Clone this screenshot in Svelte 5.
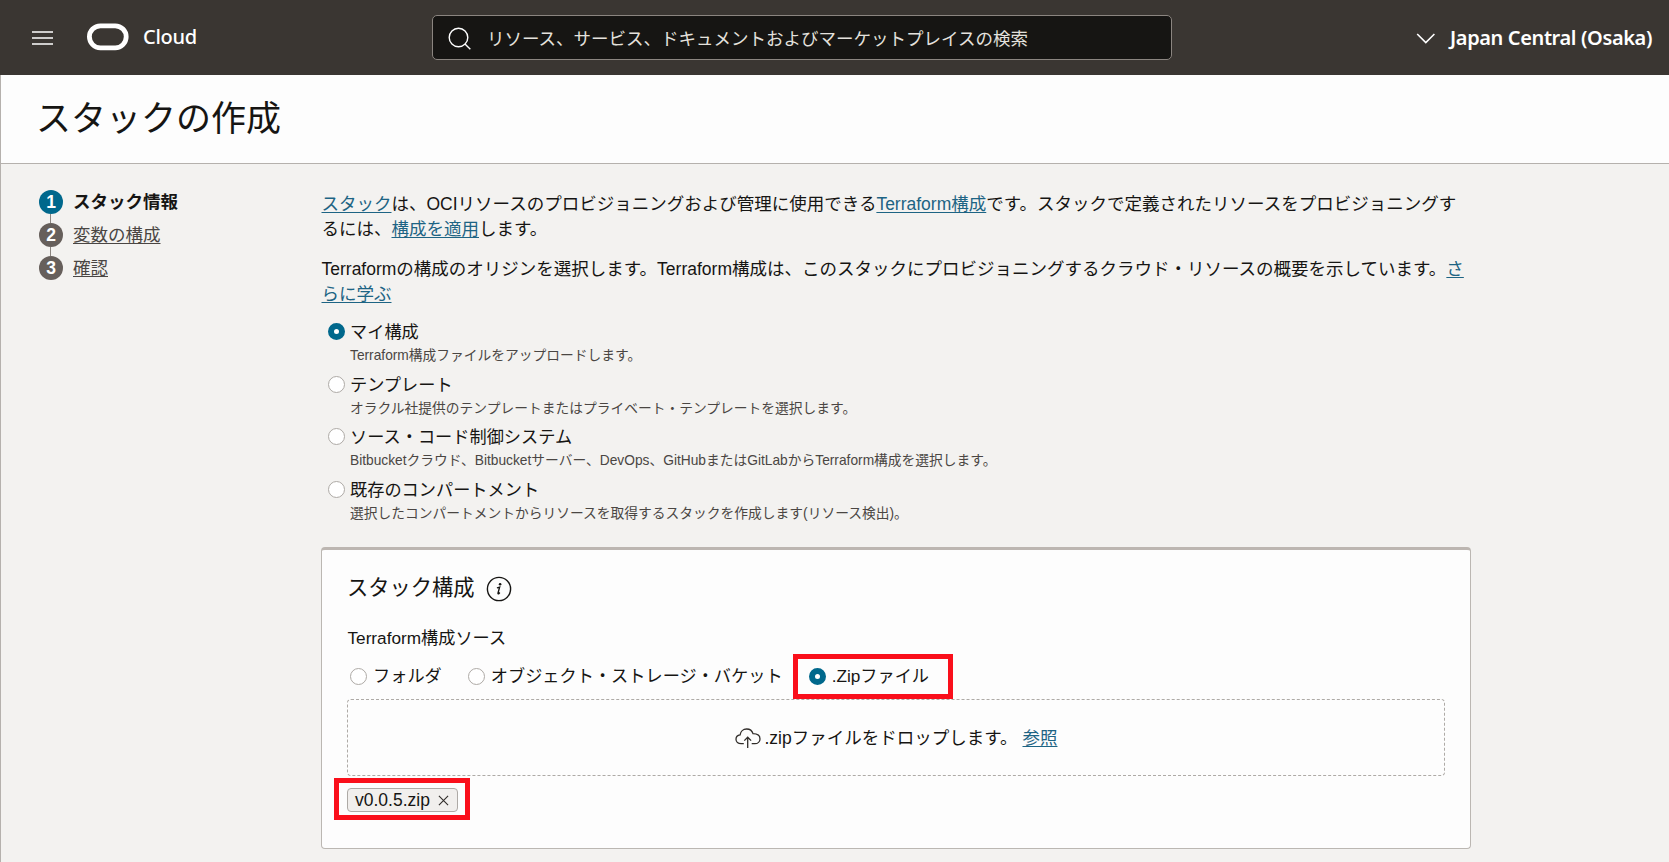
<script lang="ts">
  type Option = { value: string; label: string; hint?: string };

  const steps = ['スタック情報', '変数の構成', '確認'];

  const origins: Option[] = [
    { value: 'mine', label: 'マイ構成', hint: 'Terraform構成ファイルをアップロードします。' },
    {
      value: 'template',
      label: 'テンプレート',
      hint: 'オラクル社提供のテンプレートまたはプライベート・テンプレートを選択します。'
    },
    {
      value: 'scm',
      label: 'ソース・コード制御システム',
      hint: 'Bitbucketクラウド、Bitbucketサーバー、DevOps、GitHubまたはGitLabからTerraform構成を選択します。'
    },
    {
      value: 'compartment',
      label: '既存のコンパートメント',
      hint: '選択したコンパートメントからリソースを取得するスタックを作成します(リソース検出)。'
    }
  ];

  const sources: Option[] = [
    { value: 'folder', label: 'フォルダ' },
    { value: 'bucket', label: 'オブジェクト・ストレージ・バケット' },
    { value: 'zip', label: '.Zipファイル' }
  ];

  let currentStep = $state(0);
  let origin = $state('mine');
  let source = $state('zip');
  let files = $state(['v0.0.5.zip']);

  function removeFile(name: string) {
    files = files.filter((file) => file !== name);
  }
</script>

<div class="page">
  <header class="topbar">
    <div class="brand">
      <button class="menu" aria-label="メニュー">
        <svg width="22" height="16" viewBox="0 0 22 16">
          <path d="M0 2h21M0 8h21M0 14h21" stroke="#fff" stroke-width="1.6" />
        </svg>
      </button>
      <svg class="logo" width="42" height="28" viewBox="0 0 42 28">
        <rect x="2.4" y="2.8" width="36.8" height="22" rx="11" fill="none" stroke="#fff" stroke-width="4.8" />
      </svg>
      <span class="brand-name">Cloud</span>
    </div>
    <div class="search">
      <svg width="24" height="24" viewBox="0 0 24 24" fill="none" stroke="#fff" stroke-width="1.4">
        <circle cx="10.5" cy="10.5" r="9.3" />
        <path d="M17 17l5.3 5.3" />
      </svg>
      <span>リソース、サービス、ドキュメントおよびマーケットプレイスの検索</span>
    </div>
    <button class="region">
      <svg width="20" height="12" viewBox="0 0 20 12" fill="none" stroke="#fff" stroke-width="1.6">
        <path d="M1.2 1l8.6 8.6L18.4 1" />
      </svg>
      <span>Japan Central (Osaka)</span>
    </button>
  </header>

  <div class="title-bar">
    <h1>スタックの作成</h1>
  </div>

  <div class="body">
    <ol class="steps">
      {#each steps as step, i}
        <li class="step" class:step--current={i === currentStep}>
          <span class="step-number">{i + 1}</span>
          <button class="step-label" onclick={() => (currentStep = i)}>{step}</button>
        </li>
      {/each}
    </ol>

    <main>
      <p>
        <a href="#stack">スタック</a>は、OCIリソースのプロビジョニングおよび管理に使用できる<a href="#terraform">Terraform構成</a>です。スタックで定義されたリソースをプロビジョニングするには、<a href="#apply">構成を適用</a>します。
      </p>
      <p>
        Terraformの構成のオリジンを選択します。Terraform構成は、このスタックにプロビジョニングするクラウド・リソースの概要を示しています。<a href="#more">さらに学ぶ</a>
      </p>

      <div class="origins">
        {#each origins as option}
          <label class="option">
            <input type="radio" name="origin" value={option.value} bind:group={origin} />
            <span class="option-label">{option.label}</span>
            <span class="option-hint">{option.hint}</span>
          </label>
        {/each}
      </div>

      <section class="card">
        <h2>
          スタック構成
          <svg width="26" height="26" viewBox="0 0 26 26">
            <circle cx="13" cy="13" r="11.6" fill="none" stroke="#161513" stroke-width="1.4" />
            <circle cx="14.1" cy="8.2" r="1.3" fill="#161513" />
            <path d="M10.9 11.9c1.1-.2 1.9-.5 2.7-.8l-1.6 6c-.2.8.4.9 1 .3l.8-.9" fill="none" stroke="#161513" stroke-width="1.4" />
          </svg>
        </h2>
        <h3>Terraform構成ソース</h3>

        <div class="sources">
          {#each sources as option}
            <label class="source" class:source--marked={option.value === 'zip'}>
              <input type="radio" name="source" value={option.value} bind:group={source} />
              <span>{option.label}</span>
            </label>
          {/each}
        </div>

        <div class="drop">
          <svg width="26" height="21" viewBox="0 0 26 21" fill="none" stroke="#312d2a" stroke-width="1.3">
            <path d="M8.8 15.7H6.1C3.1 15.7 1 13.8 1 11.3c0-2.4 1.7-4.2 4.1-4.5C5.5 3.4 8.2 1 11.6 1c3.1 0 5.6 1.8 6.4 4.7 4 .1 7 2 7 5.2 0 2.8-2.2 4.8-5.2 4.8h-3.1" />
            <path d="M12.7 20V9.4M9.3 12.6l3.4-3.4 3.4 3.4" />
          </svg>
          <span>.zipファイルをドロップします。</span>
          <a href="#browse">参照</a>
        </div>

        <div class="files">
          {#each files as file}
            <span class="file">
              {file}
              <button aria-label="削除" onclick={() => removeFile(file)}>
                <svg width="11" height="11" viewBox="0 0 12 12">
                  <path d="M1 1l10 10M11 1L1 11" stroke="#312d2a" stroke-width="1.2" />
                </svg>
              </button>
            </span>
          {/each}
        </div>
      </section>
    </main>
  </div>
</div>

<style>
  :global(body) {
    background: #f3f2f0;
  }

  .page {
    box-sizing: border-box;
    height: 862px;
    overflow: hidden;
    display: flex;
    flex-direction: column;
    font-family: 'Liberation Sans', 'Noto Sans CJK JP', sans-serif;
    font-size: 17.5px;
    line-height: 25px;
    color: #161513;
  }

  button {
    padding: 0;
    border: 0;
    background: none;
    font: inherit;
    color: inherit;
    cursor: pointer;
  }

  svg {
    display: block;
    flex: none;
  }

  a {
    color: #1d6484;
    text-decoration: underline;
    text-decoration-thickness: 1px;
    text-underline-offset: 2px;
  }

  .topbar {
    box-sizing: border-box;
    flex: none;
    height: 75px;
    padding: 0 17px 0 32px;
    display: grid;
    grid-template-columns: 400px 740px 1fr;
    background: #3a3632;
    color: #fff;
  }

  .brand {
    height: 73px;
    display: flex;
    align-items: center;
  }

  .menu {
    margin-top: 3px;
  }

  .logo {
    margin-left: 33px;
  }

  .brand-name {
    margin-left: 14px;
    font-family: 'Noto Sans', sans-serif;
    font-size: 20px;
    font-weight: 500;
    letter-spacing: -0.3px;
  }

  .search {
    box-sizing: border-box;
    height: 45px;
    margin-top: 15px;
    padding-left: 15px;
    display: flex;
    align-items: center;
    gap: 15px;
    border: 1px solid #8b8580;
    border-radius: 5px;
    background: #161513;
    color: #e4e1dd;
  }

  .search svg {
    margin-top: 3px;
  }

  .search span {
    padding-top: 3px;
  }

  .region {
    height: 75px;
    display: flex;
    align-items: center;
    justify-content: flex-end;
    gap: 14px;
    font-family: 'Noto Sans', sans-serif;
    font-size: 20px;
    font-weight: 600;
    letter-spacing: -0.38px;
    white-space: nowrap;
  }

  .region svg {
    margin-top: 3px;
  }

  .title-bar {
    box-sizing: border-box;
    flex: none;
    height: 89px;
    padding-left: 35px;
    display: flex;
    align-items: center;
    border-left: 1px solid #b5b1ad;
    border-bottom: 1px solid #b5b1ad;
    background: #fdfdfd;
  }

  h1 {
    margin: 0;
    font-size: 35px;
    font-weight: 400;
    line-height: 44px;
  }

  .body {
    flex: 1;
    padding: 28px 0 0 38px;
    display: grid;
    grid-template-columns: 282px 1150px;
    border-left: 1px solid #b5b1ad;
  }

  .steps {
    list-style: none;
    margin: -2px 0 0;
    padding: 0;
  }

  .step {
    height: 33px;
    display: flex;
    align-items: flex-start;
    gap: 10px;
  }

  .step-number {
    width: 24px;
    height: 24px;
    border-radius: 50%;
    background: #665f5b;
    color: #fff;
    font-weight: 700;
    line-height: 24px;
    text-align: center;
    position: relative;
  }

  .step:not(:last-child) .step-number::after {
    content: '';
    position: absolute;
    top: 24px;
    left: 11px;
    width: 1px;
    height: 9px;
    background: #8b8580;
  }

  .step-label {
    color: #4a4643;
    line-height: 24px;
    text-decoration: underline;
    text-decoration-thickness: 1px;
    text-underline-offset: 2px;
  }

  .step--current .step-number {
    background: #00688c;
  }

  .step--current .step-label {
    color: #161513;
    font-weight: 700;
    text-decoration: none;
  }

  p {
    margin: 0 0 15px 0.5px;
  }

  input {
    appearance: none;
    box-sizing: border-box;
    flex: none;
    width: 17px;
    height: 17px;
    margin: 0;
    border: 1px solid #aeaaa6;
    border-radius: 50%;
    background: #fff;
  }

  input:checked {
    border: 6px solid #00688c;
  }

  .origins {
    margin-top: -2px;
    padding-left: 7px;
  }

  .option {
    height: 52.5px;
    display: grid;
    grid-template-columns: 17px 1fr;
    grid-template-rows: 25px 21px;
    align-content: start;
    align-items: center;
    column-gap: 5px;
  }

  .option input {
    margin-bottom: 2px;
  }

  .option-label {
    font-size: 17.2px;
  }

  .option-hint {
    grid-column: 2;
    font-size: 13.75px;
    line-height: 21px;
    color: #4a4643;
  }

  .card {
    box-sizing: border-box;
    height: 302px;
    margin-top: 17px;
    padding: 23px 25px 0;
    border: 1px solid #bbb7b2;
    border-top: 3px solid #bcb6b1;
    border-radius: 4px;
    background: #fdfdfd;
  }

  h2 {
    margin: 0;
    display: flex;
    align-items: center;
    gap: 11px;
    font-size: 21.25px;
    font-weight: 400;
    line-height: 26px;
  }

  h2 svg {
    margin-top: 3px;
  }

  h3 {
    margin: 24px 0 0 0.5px;
    font-size: 17.2px;
    font-weight: 400;
  }

  .sources {
    box-sizing: border-box;
    height: 48px;
    padding: 3px 0 0 3px;
    display: flex;
    align-items: center;
    font-size: 17.2px;
  }

  .source {
    display: flex;
    align-items: center;
    gap: 6px;
    margin-right: 26px;
  }

  .source--marked {
    position: relative;
  }

  .source--marked::after {
    content: '';
    box-sizing: border-box;
    position: absolute;
    top: -10px;
    left: -16px;
    width: 160px;
    height: 45px;
    border: 5px solid #fa0f1b;
  }

  .drop {
    box-sizing: border-box;
    height: 77px;
    padding-top: 2px;
    display: flex;
    align-items: center;
    justify-content: center;
    border: 1px dashed #aeaaa6;
    border-radius: 4px;
  }

  .drop svg {
    margin-right: 4px;
  }

  .drop a {
    margin-left: 5px;
  }

  .files {
    margin-top: 12px;
    display: flex;
  }

  .file {
    box-sizing: border-box;
    width: 111px;
    height: 24px;
    padding: 0 8px 0 7px;
    display: flex;
    align-items: center;
    justify-content: space-between;
    border: 1px solid #aeaaa6;
    border-radius: 4px;
    background: #f1efed;
    position: relative;
  }

  .file::after {
    content: '';
    box-sizing: border-box;
    position: absolute;
    inset: -11px -13px -9px -14px;
    border: 5px solid #fa0f1b;
    pointer-events: none;
  }
</style>
